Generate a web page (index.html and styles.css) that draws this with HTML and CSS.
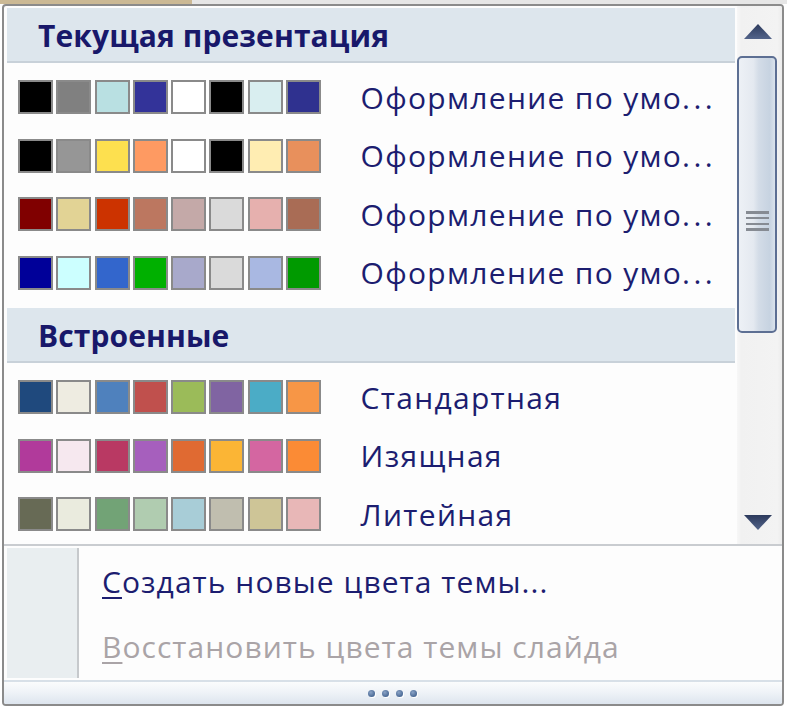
FILE: index.html
```html
<!DOCTYPE html>
<html lang="ru">
<head>
<meta charset="utf-8">
<title>Цвета темы</title>
<link rel="stylesheet" href="styles.css">
</head>
<body>
<div class="top-strip"><span class="tab-edge"></span></div>
<div class="frame">
  <div class="scroll-area">
    <div class="content">
      <div class="section-head">Текущая презентация</div>
      <div class="rows">
        <div class="row">
          <div class="swatches">
            <span class="sw" style="background:#000000"></span>
            <span class="sw" style="background:#808080"></span>
            <span class="sw" style="background:#b9e0e2"></span>
            <span class="sw" style="background:#333399"></span>
            <span class="sw" style="background:#ffffff"></span>
            <span class="sw" style="background:#000000"></span>
            <span class="sw" style="background:#d9eef0"></span>
            <span class="sw" style="background:#2f318f"></span>
          </div>
          <span class="label">Оформление по умо<span class="dots">...</span></span>
        </div>
        <div class="row">
          <div class="swatches">
            <span class="sw" style="background:#000000"></span>
            <span class="sw" style="background:#969696"></span>
            <span class="sw" style="background:#fde04f"></span>
            <span class="sw" style="background:#fe9a62"></span>
            <span class="sw" style="background:#ffffff"></span>
            <span class="sw" style="background:#000000"></span>
            <span class="sw" style="background:#ffedb2"></span>
            <span class="sw" style="background:#e8905c"></span>
          </div>
          <span class="label">Оформление по умо<span class="dots">...</span></span>
        </div>
        <div class="row">
          <div class="swatches">
            <span class="sw" style="background:#800000"></span>
            <span class="sw" style="background:#e2d395"></span>
            <span class="sw" style="background:#cc3300"></span>
            <span class="sw" style="background:#bc7760"></span>
            <span class="sw" style="background:#c4a9a8"></span>
            <span class="sw" style="background:#dadada"></span>
            <span class="sw" style="background:#e6b0ae"></span>
            <span class="sw" style="background:#a96c55"></span>
          </div>
          <span class="label">Оформление по умо<span class="dots">...</span></span>
        </div>
        <div class="row">
          <div class="swatches">
            <span class="sw" style="background:#000099"></span>
            <span class="sw" style="background:#ccffff"></span>
            <span class="sw" style="background:#3366cc"></span>
            <span class="sw" style="background:#00b000"></span>
            <span class="sw" style="background:#a8a9cb"></span>
            <span class="sw" style="background:#dadada"></span>
            <span class="sw" style="background:#a9b8e2"></span>
            <span class="sw" style="background:#009a00"></span>
          </div>
          <span class="label">Оформление по умо<span class="dots">...</span></span>
        </div>
      </div>
      <div class="section-head">Встроенные</div>
      <div class="rows">
        <div class="row">
          <div class="swatches">
            <span class="sw" style="background:#1f497d"></span>
            <span class="sw" style="background:#eeece1"></span>
            <span class="sw" style="background:#4f81bd"></span>
            <span class="sw" style="background:#c0504d"></span>
            <span class="sw" style="background:#9bbb59"></span>
            <span class="sw" style="background:#8064a2"></span>
            <span class="sw" style="background:#4bacc6"></span>
            <span class="sw" style="background:#f79646"></span>
          </div>
          <span class="label">Стандартная</span>
        </div>
        <div class="row">
          <div class="swatches">
            <span class="sw" style="background:#b13a9b"></span>
            <span class="sw" style="background:#f6e8ef"></span>
            <span class="sw" style="background:#b93963"></span>
            <span class="sw" style="background:#a65fbd"></span>
            <span class="sw" style="background:#e06a32"></span>
            <span class="sw" style="background:#fbb535"></span>
            <span class="sw" style="background:#d466a1"></span>
            <span class="sw" style="background:#fb8b35"></span>
          </div>
          <span class="label">Изящная</span>
        </div>
        <div class="row">
          <div class="swatches">
            <span class="sw" style="background:#676a55"></span>
            <span class="sw" style="background:#eaebde"></span>
            <span class="sw" style="background:#72a376"></span>
            <span class="sw" style="background:#b0ccb0"></span>
            <span class="sw" style="background:#a8cdd7"></span>
            <span class="sw" style="background:#c0beaf"></span>
            <span class="sw" style="background:#cec597"></span>
            <span class="sw" style="background:#e8b7b7"></span>
          </div>
          <span class="label">Литейная</span>
        </div>
      </div>
    </div>
    <div class="scrollbar">
      <div class="sb-btn sb-up">
        <svg class="sb-arrow" width="28" height="15" viewBox="0 0 28 15"><defs><linearGradient id="ga" x1="0" y1="0" x2="0" y2="1"><stop offset="0" stop-color="#2c3a5c"/><stop offset="1" stop-color="#53648a"/></linearGradient></defs><polygon points="0,15 14,0 28,15" fill="url(#ga)"/></svg>
      </div>
      <div class="sb-thumb">
        <div class="thumb-grip"><span></span><span></span><span></span><span></span></div>
      </div>
      <div class="sb-track"></div>
      <div class="sb-btn sb-down">
        <svg class="sb-arrow" width="28" height="15" viewBox="0 0 28 15"><defs><linearGradient id="gb" x1="0" y1="0" x2="0" y2="1"><stop offset="0" stop-color="#2c3a5c"/><stop offset="1" stop-color="#53648a"/></linearGradient></defs><polygon points="0,0 28,0 14,15" fill="url(#gb)"/></svg>
      </div>
    </div>
  </div>
  <div class="sep"></div>
  <div class="menu">
    <div class="gutter"></div>
    <div class="items">
      <div class="item"><span class="key">С</span>оздать новые цвета темы...</div>
      <div class="item disabled"><span class="key">В</span>осстановить цвета темы слайда</div>
    </div>
  </div>
  <div class="grip-line"></div>
  <div class="grip"><span class="dot"></span><span class="dot"></span><span class="dot"></span><span class="dot"></span></div>
</div>
</body>
</html>
```

FILE: styles.css
```css
html, body {
  margin: 0;
  padding: 0;
  background: #ffffff;
}

body {
  width: 787px;
  height: 709px;
  overflow: hidden;
  font-family: "Open Sans", "Noto Sans", sans-serif;
}

.top-strip {
  height: 4px;
  background: #e6e6e6;
  display: flex;
}

.tab-edge {
  width: 192px;
  background: #cbb995;
}

.frame {
  margin: 0 3px 3px 2px;
  height: 698px;
  border: 2px solid #8b8b8b;
  border-radius: 4px;
  background: #fdfdfd;
  display: flex;
  flex-direction: column;
  overflow: hidden;
}

.scroll-area {
  height: 538px;
  display: flex;
  flex: none;
}

.content {
  flex: 1;
  overflow: hidden;
  padding: 2px 2px 0 3px;
}

.section-head {
  background: #dde6ed;
  border-bottom: 2px solid #c8d1d9;
  display: flex;
  align-items: center;
  padding: 2px 0 0 31px;
  box-sizing: border-box;
  height: 55px;
  font-weight: 700;
  font-size: 30px;
  color: #18186a;
  letter-spacing: 0.1px;
}

.rows {
  padding: 5px 0 6px;
}

.row {
  height: 58.5px;
  display: flex;
  align-items: center;
  padding-left: 11px;
}

.swatches {
  display: flex;
  gap: 3.3px;
}

.sw {
  width: 35px;
  height: 34px;
  box-sizing: border-box;
  border: 2px solid #8a8a8a;
}

.label {
  margin-left: 39.5px;
  font-size: 30px;
  letter-spacing: 1.3px;
  color: #1c1d70;
  white-space: nowrap;
}

.label .dots {
  letter-spacing: 3.5px;
}

.scrollbar {
  width: 45px;
  flex: none;
  display: flex;
  flex-direction: column;
  background: linear-gradient(to right, #f7f7f7 0%, #f1f1f1 10%, #f3f3f3 90%, #ececec 100%);
}

.sb-btn {
  display: flex;
  justify-content: center;
  flex: none;
  padding-right: 4px;
  box-sizing: border-box;
}

.sb-up {
  height: 49px;
  align-items: center;
  padding-top: 2px;
}

.sb-down {
  height: 47px;
  align-items: center;
  padding-top: 4px;
}

.sb-thumb {
  flex: none;
  width: 40px;
  height: 277px;
  margin-top: 1px;
  box-sizing: border-box;
  border: 2px solid #5d6f93;
  border-radius: 5px;
  background: linear-gradient(to right, #edf1f6 0%, #e4e9f0 40%, #d3dce7 55%, #c7d3e1 85%, #dbe3ec 100%);
  padding-top: 153px;
}

.thumb-grip {
  width: 23px;
  margin: 0 auto;
  display: flex;
  flex-direction: column;
  gap: 3.3px;
}

.thumb-grip span {
  height: 2.5px;
  background: #868b93;
}

.sb-track {
  flex: 1;
}

.sep {
  height: 2px;
  background: #c9ccd0;
  flex: none;
}

.menu {
  height: 134px;
  flex: none;
  display: flex;
  padding-left: 3px;
}

.gutter {
  width: 70px;
  margin: 2px 0;
  background: #e9eef0;
  border-right: 2px solid #c6c9cc;
}

.items {
  flex: 1;
  padding: 3px 0 1px 23px;
  display: flex;
  flex-direction: column;
}

.item {
  height: 65px;
  display: flex;
  align-items: center;
  font-size: 30px;
  letter-spacing: 1.05px;
  color: #1c1d70;
  white-space: nowrap;
}

.item .key {
  text-decoration: underline;
  text-decoration-thickness: 2px;
  text-underline-offset: 4px;
}

.item.disabled {
  color: #aaa4a7;
}

.grip-line {
  height: 2px;
  background: #d8e0e8;
  flex: none;
}

.grip {
  height: 22px;
  flex: none;
  background: linear-gradient(to bottom, #fbfcfd 0%, #eef2f7 50%, #dde5ee 100%);
  display: flex;
  justify-content: center;
  align-items: center;
  gap: 7px;
  padding-right: 2px;
}

.dot {
  width: 7px;
  height: 7px;
  border-radius: 50%;
  background: radial-gradient(circle at 40% 35%, #8aa3c6 0%, #4b6a96 70%);
  box-shadow: 1px 1px 0 #ffffff;
}
```
